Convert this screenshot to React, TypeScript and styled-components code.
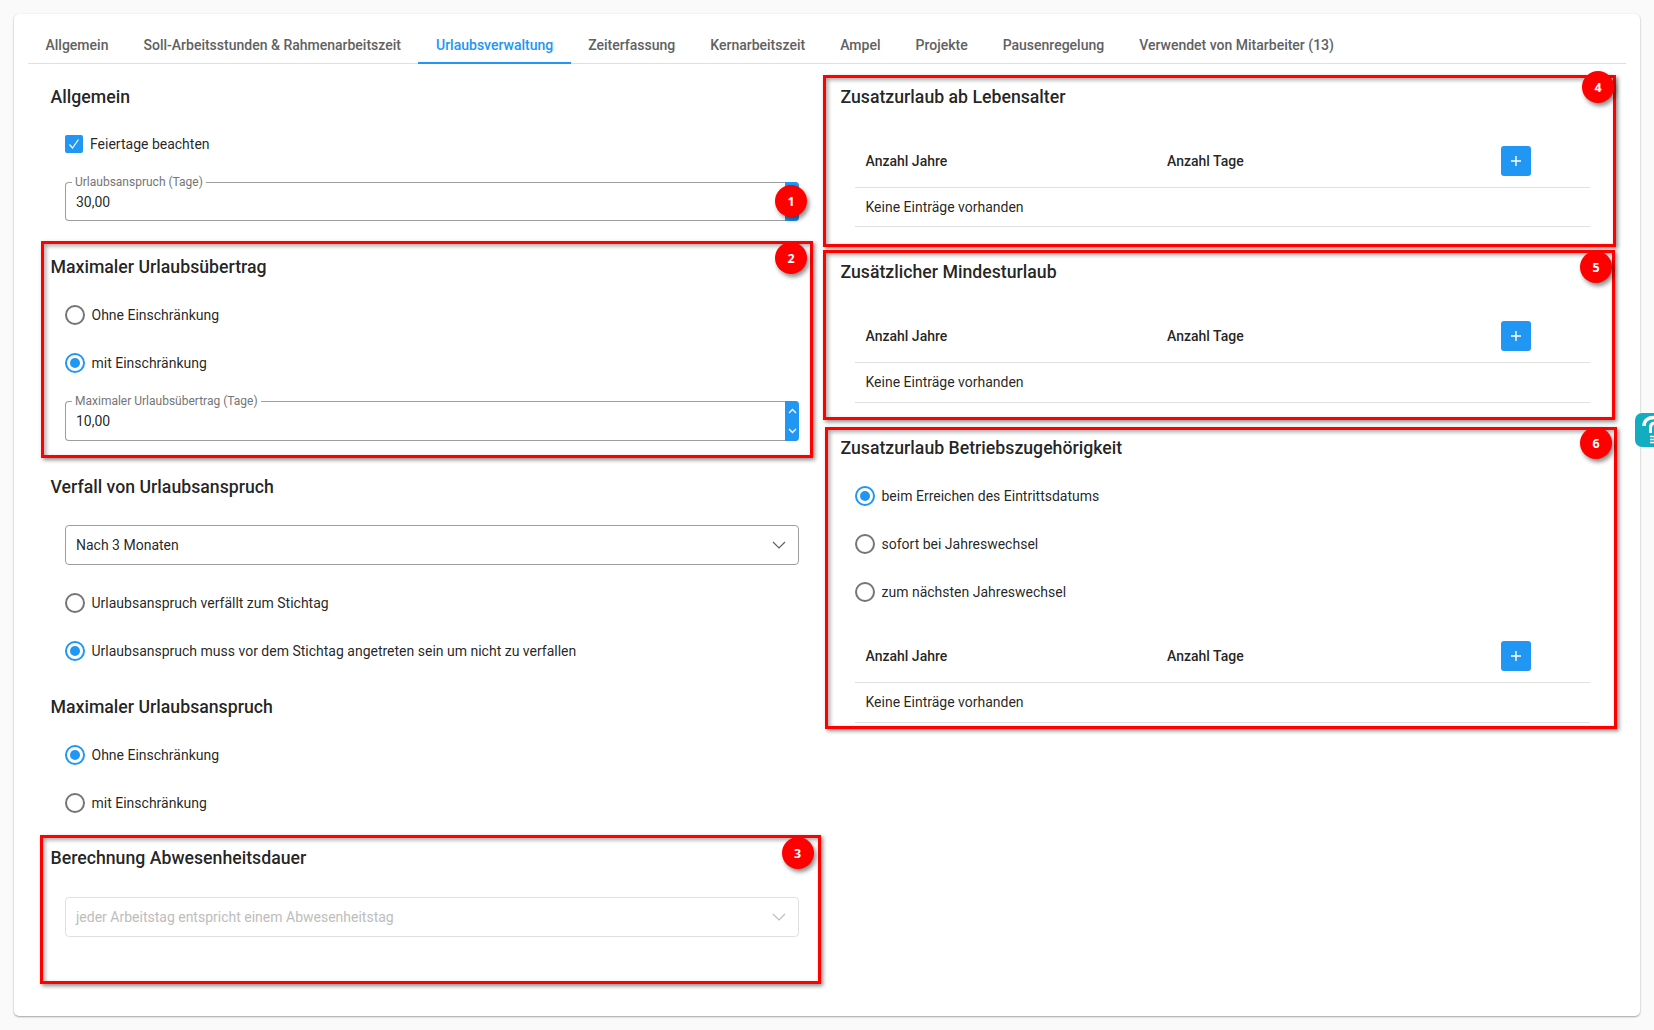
import React from "react";
import styled, { createGlobalStyle } from "styled-components";

const Global = createGlobalStyle`
  html, body { margin: 0; padding: 0; height: 100%; overflow: hidden; background: #fafafa; }
  body { font-family: Roboto, "Noto Sans", sans-serif; font-size: 14px; color: rgba(0,0,0,.87); }
  * { box-sizing: border-box; }
`;

const Card = styled.main`
  margin: 14px;
  height: 1002px;
  padding: 0 14px;
  background: #fff;
  border-radius: 5px;
  box-shadow: 0 1px 2px rgba(0,0,0,.35), 0 0 2px rgba(0,0,0,.06);
`;
const Tabs = styled.nav`
  display: flex;
  height: 50px;
  border-bottom: 1px solid #e0e0e0;
`;
const Tab = styled.div<{ $active?: boolean }>`
  display: flex;
  align-items: center;
  padding: 19px 17.53px 6px;
  font-size: 14px;
  font-weight: 500;
  white-space: nowrap;
  color: ${(p) => (p.$active ? "#2196f3" : "#616161")};
  border-bottom: 2px solid ${(p) => (p.$active ? "#2196f3" : "transparent")};
  margin-bottom: -1px;
`;
const Columns = styled.div`
  display: grid;
  grid-template-columns: 799px 799px;
`;
const LeftColumn = styled.div`
  padding: 21px 28px 0 37px;
`;
const RightColumn = styled.div`
  padding: 21px 36px 0 28px;
`;
const Section = styled.section<{ $mt?: number }>`
  position: relative;
  margin-top: ${(p) => p.$mt ?? 0}px;
`;
const Title = styled.h2`
  margin: 0 0 0 -14.5px;
  font-size: 17.7px;
  line-height: 24px;
  font-weight: 500;
  color: rgba(0,0,0,.87);
`;
const Frame = styled.div<{ $t: number; $l: number; $r: number; $b: number }>`
  position: absolute;
  top: ${(p) => p.$t}px;
  left: ${(p) => p.$l}px;
  right: ${(p) => p.$r}px;
  bottom: ${(p) => p.$b}px;
  border: 3.5px solid #ff0000;
  box-shadow: 2px 2px 4px rgba(0,0,0,.45), inset 2px 2px 4px rgba(0,0,0,.35);
  pointer-events: none;
`;
const Badge = styled.div<{ $t: number; $r: number }>`
  position: absolute;
  top: ${(p) => p.$t}px;
  right: ${(p) => p.$r}px;
  width: 32px;
  height: 32px;
  border-radius: 50%;
  background: #ff0000;
  color: #fff;
  font-family: "Open Sans", Roboto, sans-serif;
  font-size: 12.5px;
  font-weight: 700;
  display: flex;
  align-items: center;
  justify-content: center;
  box-shadow: 2px 3px 4px rgba(0,0,0,.45);
  z-index: 2;
`;
const CheckRow = styled.label`
  display: flex;
  align-items: center;
  gap: 7px;
  height: 24px;
  margin-top: 23px;
`;
const CheckBox = styled.span`
  width: 18px;
  height: 18px;
  border-radius: 2px;
  background: #2196f3;
  display: flex;
  align-items: center;
  justify-content: center;
`;
const RadioGroup = styled.div<{ $mt: number }>`
  margin-top: ${(p) => p.$mt}px;
`;
const RadioRow = styled.label`
  display: flex;
  align-items: center;
  gap: 6.5px;
  height: 48px;
`;
const RadioDot = styled.span<{ $on?: boolean }>`
  flex: none;
  width: 20px;
  height: 20px;
  border-radius: 50%;
  border: 2px solid ${(p) => (p.$on ? "#2196f3" : "#757575")};
  display: flex;
  align-items: center;
  justify-content: center;
  &::after {
    content: "";
    width: 10px;
    height: 10px;
    border-radius: 50%;
    background: ${(p) => (p.$on ? "#2196f3" : "transparent")};
  }
`;
const Field = styled.div<{ $mt: number; $h: number }>`
  position: relative;
  display: flex;
  align-items: stretch;
  height: ${(p) => p.$h}px;
  margin-top: ${(p) => p.$mt}px;
  border: 1px solid #9e9e9e;
  border-right: 0;
  border-radius: 4px;
`;
const FieldLabel = styled.span`
  position: absolute;
  top: -8px;
  left: 6px;
  padding: 0 3px;
  background: #fff;
  font-size: 12px;
  line-height: 14px;
  color: #757575;
`;
const FieldInput = styled.input`
  flex: 1;
  min-width: 0;
  border: 0;
  outline: 0;
  padding: 0 10px;
  background: transparent;
  font: inherit;
  color: rgba(0,0,0,.87);
`;
const Spinner = styled.div`
  flex: none;
  width: 14px;
  margin: -1px 0 -1px 0;
  background: #2196f3;
  border-radius: 0 4px 4px 0;
  display: flex;
  flex-direction: column;
  align-items: center;
  justify-content: space-between;
  padding: 7px 0;
`;
const Select = styled.div<{ $disabled?: boolean; $mt: number }>`
  display: flex;
  align-items: center;
  justify-content: space-between;
  height: 40px;
  margin-top: ${(p) => p.$mt}px;
  padding: 0 12px 0 10px;
  border: 1px solid ${(p) => (p.$disabled ? "#e0e0e0" : "#9e9e9e")};
  border-radius: 4px;
  color: ${(p) => (p.$disabled ? "#bdbdbd" : "rgba(0,0,0,.87)")};
`;
const Grid = styled.div<{ $mt: number }>`
  margin-top: ${(p) => p.$mt}px;
`;
const HeaderRow = styled.div`
  display: grid;
  grid-template-columns: 301.5px 334px 1fr;
  align-items: center;
  padding: 0 10px 11px 10.5px;
  border-bottom: 1px solid #e0e0e0;
  font-weight: 500;
`;
const EmptyRow = styled.div`
  display: flex;
  align-items: center;
  height: 39.5px;
  padding: 0 10.5px;
  border-bottom: 1px solid #e0e0e0;
`;
const AddButton = styled.button`
  width: 30px;
  height: 30px;
  border: 0;
  padding: 0;
  border-radius: 3px;
  background: #2196f3;
  display: flex;
  align-items: center;
  justify-content: center;
`;
const Help = styled.div`
  position: fixed;
  top: 413px;
  right: 0;
  width: 19px;
  height: 34px;
  border-radius: 7px 0 0 7px;
  background: #12adc1;
  overflow: hidden;
`;

const Check = () => (
  <svg width="14" height="14" viewBox="0 0 14 14" fill="none" stroke="#fff" strokeWidth="1.2">
    <path d="M2.5 7.5 L5.5 11 L11.5 2.5" />
  </svg>
);
const Chevron = ({ up }: { up?: boolean }) => (
  <svg width="9" height="6" viewBox="0 0 9 6" fill="none" stroke="#fff" strokeWidth="1.3">
    <path d={up ? "M1 5 L4.5 1.5 L8 5" : "M1 1 L4.5 4.5 L8 1"} />
  </svg>
);
const Caret = ({ color }: { color: string }) => (
  <svg width="14" height="8" viewBox="0 0 14 8" fill="none" stroke={color} strokeWidth="1.2">
    <path d="M1 1 L7 7 L13 1" />
  </svg>
);
const Plus = () => (
  <svg width="12" height="12" viewBox="0 0 12 12" fill="none" stroke="#fff" strokeWidth="1.4">
    <path d="M6 1 V11 M1 6 H11" />
  </svg>
);

const Radio = ({ on, children }: { on?: boolean; children: React.ReactNode }) => (
  <RadioRow>
    <RadioDot $on={on} />
    {children}
  </RadioRow>
);
const NumberField = ({ mt, h, label, value, badge }: { mt: number; h: number; label: string; value: string; badge?: React.ReactNode }) => (
  <Field $mt={mt} $h={h}>
    <FieldLabel>{label}</FieldLabel>
    <FieldInput readOnly value={value} />
    <Spinner>
      <Chevron up />
      <Chevron />
    </Spinner>
    {badge}
  </Field>
);
const Table = ({ mt }: { mt: number }) => (
  <Grid $mt={mt}>
    <HeaderRow>
      <span>Anzahl Jahre</span>
      <span>Anzahl Tage</span>
      <AddButton aria-label="Hinzufügen">
        <Plus />
      </AddButton>
    </HeaderRow>
    <EmptyRow>Keine Einträge vorhanden</EmptyRow>
  </Grid>
);

const tabs = [
  "Allgemein",
  "Soll-Arbeitsstunden & Rahmenarbeitszeit",
  "Urlaubsverwaltung",
  "Zeiterfassung",
  "Kernarbeitszeit",
  "Ampel",
  "Projekte",
  "Pausenregelung",
  "Verwendet von Mitarbeiter (13)",
];

export default function App() {
  return (
    <>
      <Global />
      <Card>
        <Tabs>
          {tabs.map((t) => (
            <Tab key={t} $active={t === "Urlaubsverwaltung"}>
              {t}
            </Tab>
          ))}
        </Tabs>
        <Columns>
          <LeftColumn>
            <Section>
              <Title>Allgemein</Title>
              <CheckRow>
                <CheckBox>
                  <Check />
                </CheckBox>
                Feiertage beachten
              </CheckRow>
              <NumberField mt={26} h={39} label="Urlaubsanspruch (Tage)" value="30,00" badge={<Badge $t={2} $r={-8}>1</Badge>} />
            </Section>
            <Section $mt={34}>
              <Frame $t={-14} $l={-24} $r={-14} $b={-17} />
              <Badge $t={-13} $r={-8}>2</Badge>
              <Title>Maximaler Urlaubsübertrag</Title>
              <RadioGroup $mt={12}>
                <Radio>Ohne Einschränkung</Radio>
                <Radio on>mit Einschränkung</Radio>
              </RadioGroup>
              <NumberField mt={14} h={40} label="Maximaler Urlaubsübertrag (Tage)" value="10,00" />
            </Section>
            <Section $mt={34}>
              <Title>Verfall von Urlaubsanspruch</Title>
              <Select $mt={26}>
                Nach 3 Monaten
                <Caret color="#616161" />
              </Select>
              <RadioGroup $mt={14}>
                <Radio>Urlaubsanspruch verfällt zum Stichtag</Radio>
                <Radio on>Urlaubsanspruch muss vor dem Stichtag angetreten sein um nicht zu verfallen</Radio>
              </RadioGroup>
            </Section>
            <Section $mt={20}>
              <Title>Maximaler Urlaubsanspruch</Title>
              <RadioGroup $mt={11.5}>
                <Radio on>Ohne Einschränkung</Radio>
                <Radio>mit Einschränkung</Radio>
              </RadioGroup>
            </Section>
            <Section $mt={19.5}>
              <Frame $t={-11} $l={-25} $r={-22} $b={-47} />
              <Badge $t={-9} $r={-14.5}>3</Badge>
              <Title>Berechnung Abwesenheitsdauer</Title>
              <Select $disabled $mt={27}>
                jeder Arbeitstag entspricht einem Abwesenheitstag
                <Caret color="#bdbdbd" />
              </Select>
            </Section>
          </LeftColumn>
          <RightColumn>
            <Section>
              <Frame $t={-10} $l={-32} $r={-26} $b={-20} />
              <Badge $t={-14} $r={-24}>4</Badge>
              <Title>Zusatzurlaub ab Lebensalter</Title>
              <Table mt={36.5} />
            </Section>
            <Section $mt={33}>
              <Frame $t={-10} $l={-32} $r={-25} $b={-17.5} />
              <Badge $t={-9} $r={-22}>5</Badge>
              <Title>Zusätzlicher Mindesturlaub</Title>
              <Table mt={37} />
            </Section>
            <Section $mt={33.5}>
              <Frame $t={-9} $l={-30} $r={-27} $b={-6.5} />
              <Badge $t={-9} $r={-22}>6</Badge>
              <Title>Zusatzurlaub Betriebszugehörigkeit</Title>
              <RadioGroup $mt={12}>
                <Radio on>beim Erreichen des Eintrittsdatums</Radio>
                <Radio>sofort bei Jahreswechsel</Radio>
                <Radio>zum nächsten Jahreswechsel</Radio>
              </RadioGroup>
              <Table mt={25} />
            </Section>
          </RightColumn>
        </Columns>
      </Card>
      <Help>
        <svg width="19" height="34" viewBox="0 0 19 34" fill="none" stroke="#fff">
          <path d="M9 13 C9 7 13 4.5 19 4.5" strokeWidth="3.4" />
          <path d="M19 10 C16.5 10.5 15.5 12.5 15.5 15 V20" strokeWidth="3" />
          <path d="M15 23.5 H19 M15 26.5 H19 M15 29.5 H19" strokeWidth="1.6" />
        </svg>
      </Help>
    </>
  );
}
